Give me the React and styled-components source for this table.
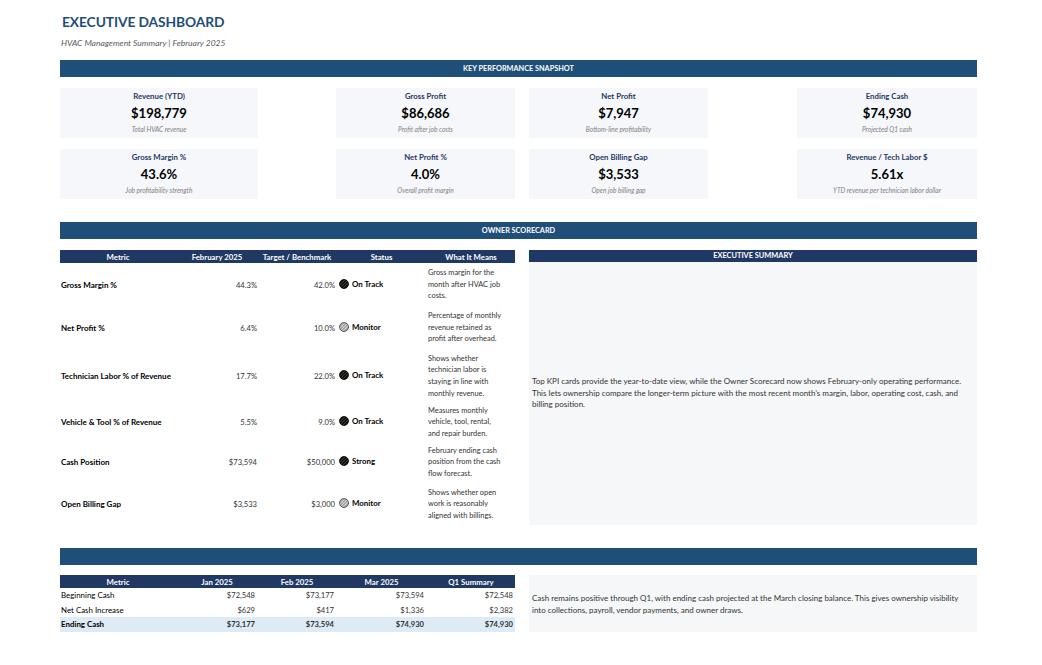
import React from 'react';
import styled, { createGlobalStyle } from 'styled-components';

const GlobalStyle = createGlobalStyle`
    html, body {
        margin: 0;
        padding: 0;
        background: #fff;
    }
    body {
        font-family: Lato, "Liberation Sans", sans-serif;
        color: #000;
    }
`;

const NAVY = '#1f3864';
const BLUE = '#1f4e79';

const Page = styled.div`
    width: 917px;
    padding: 13px 0 30px 60px;
`;

const Title = styled.h1`
    margin: 0 0 0 2px;
    font-size: 13.8px;
    line-height: 18px;
    font-weight: 700;
    letter-spacing: -0.1px;
    color: ${ BLUE };
`;

const Subtitle = styled.div`
    margin: 7px 0 0 1px;
    font-size: 8.5px;
    line-height: 10px;
    font-style: italic;
    color: #595959;
`;

const Banner = styled.div`
    margin-top: ${ props => props.gap }px;
    height: 17px;
    line-height: 17px;
    background: ${ BLUE };
    color: #fff;
    font-size: 7.3px;
    font-weight: 700;
    text-align: center;
`;

const KpiGrid = styled.div`
    margin-top: 11px;
    display: grid;
    grid-template-columns: 198px 78px 179px 14px 179px 89px 180px;
    grid-auto-rows: 50px;
    row-gap: 11px;
`;

const Card = styled.div`
    grid-column: ${ props => props.col };
    background: #f5f7fa;
    display: flex;
    flex-direction: column;
    align-items: center;
    padding-top: 3px;
`;

const CardLabel = styled.div`
    font-size: 7.8px;
    line-height: 10px;
    font-weight: 700;
    color: ${ NAVY };
`;

const CardValue = styled.div`
    margin-top: 4px;
    font-size: 13px;
    line-height: 16px;
    font-weight: 700;
    color: #000;
`;

const CardNote = styled.div`
    margin-top: 4px;
    font-size: 6.6px;
    line-height: 8px;
    font-style: italic;
    color: #7f7f7f;
`;

const Section = styled.div`
    margin-top: ${ props => props.gap }px;
    display: grid;
    grid-template-columns: 455px 448px;
    column-gap: 14px;
`;

const Table = styled.table`
    width: 455px;
    border-collapse: collapse;
    table-layout: fixed;
    font-size: 7.6px;
    align-self: start;
`;

const HeadCell = styled.th`
    height: 13px;
    padding: 0;
    background: ${ NAVY };
    color: #fff;
    font-size: 7.8px;
    font-weight: 700;
    text-align: center;
`;

const Row = styled.tr`
    height: ${ props => props.h }px;
    background: ${ props => props.highlight ? '#ddebf7' : 'transparent' };
    font-weight: ${ props => props.highlight ? 700 : 400 };
`;

const MetricCell = styled.td`
    padding: 0 0 0 1px;
    font-size: ${ props => props.bold ? 8 : 7.9 }px;
    font-weight: ${ props => props.bold ? 700 : 'inherit' };
    color: #000;
    white-space: nowrap;
`;

const NumCell = styled.td`
    padding: 0 ${ props => props.pad || 2 }px 0 0;
    text-align: right;
    color: #333;
`;

const StatusCell = styled.td`
    padding: 0 0 0 3px;
`;

const Status = styled.span`
    display: inline-flex;
    align-items: center;
    gap: 3px;
    font-size: 7.9px;
    font-weight: 700;
    color: #000;
`;

const MeaningCell = styled.td`
    padding: 0 0 0 1px;
    font-size: 7.4px;
    line-height: 11.6px;
    color: #333;
    white-space: pre;
`;

const Panel = styled.div`
    display: flex;
    flex-direction: column;
`;

const PanelHead = styled.div`
    height: 12px;
    line-height: 12px;
    background: ${ NAVY };
    color: #fff;
    font-size: 7.4px;
    font-weight: 700;
    text-align: center;
`;

const PanelBody = styled.div`
    height: ${ props => props.h }px;
    background: #f6f7f9;
    display: flex;
    align-items: center;
    padding-left: 3px;
    font-size: 8px;
    line-height: ${ props => props.lh }px;
    color: #333;
    white-space: pre;
`;

const StatusIcon = ({ tone }) => {
    const dark = tone === 'dark';
    const id = dark ? 'hatchDark' : 'hatchLight';
    return (
        <svg width="10" height="10" viewBox="0 0 10 10">
            <defs>
                <pattern id={ id } width="2.2" height="2.2" patternUnits="userSpaceOnUse" patternTransform="rotate(45)">
                    <rect width="2.2" height="2.2" fill={ dark ? '#111' : '#a8a8a8' } />
                    <line x1="0" y1="0" x2="0" y2="2.2" stroke={ dark ? '#6a5a48' : '#f4f4f4' } strokeWidth="0.9" />
                </pattern>
            </defs>
            <circle cx="5" cy="5" r="4.5" fill={ `url(#${ id })` } stroke={ dark ? '#000' : '#3a3a3a' } strokeWidth="0.8" />
        </svg>
    );
};

const kpis = [
    { col: 1, label: 'Revenue (YTD)', value: '$198,779', note: 'Total HVAC revenue' },
    { col: 3, label: 'Gross Profit', value: '$86,686', note: 'Profit after job costs' },
    { col: 5, label: 'Net Profit', value: '$7,947', note: 'Bottom-line profitability' },
    { col: 7, label: 'Ending Cash', value: '$74,930', note: 'Projected Q1 cash' },
    { col: 1, label: 'Gross Margin %', value: '43.6%', note: 'Job profitability strength' },
    { col: 3, label: 'Net Profit %', value: '4.0%', note: 'Overall profit margin' },
    { col: 5, label: 'Open Billing Gap', value: '$3,533', note: 'Open job billing gap' },
    { col: 7, label: 'Revenue / Tech Labor $', value: '5.61x', note: 'YTD revenue per technician labor dollar' },
];

const scorecard = [
    { metric: 'Gross Margin %', actual: '44.3%', target: '42.0%', status: 'On Track', tone: 'dark', h: 43,
        meaning: 'Gross margin for the\nmonth after HVAC job\ncosts.' },
    { metric: 'Net Profit %', actual: '6.4%', target: '10.0%', status: 'Monitor', tone: 'light', h: 43,
        meaning: 'Percentage of monthly\nrevenue retained as\nprofit after overhead.' },
    { metric: 'Technician Labor % of Revenue', actual: '17.7%', target: '22.0%', status: 'On Track', tone: 'dark', h: 54,
        meaning: 'Shows whether\ntechnician labor is\nstaying in line with\nmonthly revenue.' },
    { metric: 'Vehicle & Tool % of Revenue', actual: '5.5%', target: '9.0%', status: 'On Track', tone: 'dark', h: 38,
        meaning: 'Measures monthly\nvehicle, tool, rental,\nand repair burden.' },
    { metric: 'Cash Position', actual: '$73,594', target: '$50,000', status: 'Strong', tone: 'dark', h: 42,
        meaning: 'February ending cash\nposition from the cash\nflow forecast.' },
    { metric: 'Open Billing Gap', actual: '$3,533', target: '$3,000', status: 'Monitor', tone: 'light', h: 42,
        meaning: 'Shows whether open\nwork is reasonably\naligned with billings.' },
];

const cashRows = [
    { metric: 'Beginning Cash', values: ['$72,548', '$73,177', '$73,594', '$72,548'] },
    { metric: 'Net Cash Increase', values: ['$629', '$417', '$1,336', '$2,382'] },
    { metric: 'Ending Cash', values: ['$73,177', '$73,594', '$74,930', '$74,930'], highlight: true },
];

const colWidths = [116, 82, 78, 91, 88];

const Cols = () => (
    <colgroup>
        { colWidths.map((w, i) => <col key={ i } style={{ width: w }} />) }
    </colgroup>
);

const App = () => (
    <>
        <GlobalStyle />
        <Page>
            <Title>EXECUTIVE DASHBOARD</Title>
            <Subtitle>HVAC Management Summary | February 2025</Subtitle>

            <Banner gap={ 12 }>KEY PERFORMANCE SNAPSHOT</Banner>
            <KpiGrid>
                { kpis.map(k => (
                    <Card key={ k.label } col={ k.col }>
                        <CardLabel>{ k.label }</CardLabel>
                        <CardValue>{ k.value }</CardValue>
                        <CardNote>{ k.note }</CardNote>
                    </Card>
                )) }
            </KpiGrid>

            <Banner gap={ 23 }>OWNER SCORECARD</Banner>
            <Section gap={ 11 }>
                <Table>
                    <Cols />
                    <thead>
                        <tr>
                            <HeadCell>Metric</HeadCell>
                            <HeadCell>February 2025</HeadCell>
                            <HeadCell>Target / Benchmark</HeadCell>
                            <HeadCell>Status</HeadCell>
                            <HeadCell>What It Means</HeadCell>
                        </tr>
                    </thead>
                    <tbody>
                        { scorecard.map(r => (
                            <Row key={ r.metric } h={ r.h }>
                                <MetricCell bold>{ r.metric }</MetricCell>
                                <NumCell pad={ 1 }>{ r.actual }</NumCell>
                                <NumCell pad={ 1 }>{ r.target }</NumCell>
                                <StatusCell>
                                    <Status>
                                        <StatusIcon tone={ r.tone } />
                                        { r.status }
                                    </Status>
                                </StatusCell>
                                <MeaningCell>{ r.meaning }</MeaningCell>
                            </Row>
                        )) }
                    </tbody>
                </Table>
                <Panel>
                    <PanelHead>EXECUTIVE SUMMARY</PanelHead>
                    <PanelBody h={ 263 } lh={ 11.7 }>
                        { 'Top KPI cards provide the year-to-date view, while the Owner Scorecard now shows February-only operating performance.\nThis lets ownership compare the longer-term picture with the most recent month\u2019s margin, labor, operating cost, cash, and\nbilling position.' }
                    </PanelBody>
                </Panel>
            </Section>

            <Banner gap={ 23 } />
            <Section gap={ 10 }>
                <Table>
                    <Cols />
                    <thead>
                        <tr>
                            <HeadCell>Metric</HeadCell>
                            <HeadCell>Jan 2025</HeadCell>
                            <HeadCell>Feb 2025</HeadCell>
                            <HeadCell>Mar 2025</HeadCell>
                            <HeadCell>Q1 Summary</HeadCell>
                        </tr>
                    </thead>
                    <tbody>
                        { cashRows.map(r => (
                            <Row key={ r.metric } h={ 14.5 } highlight={ r.highlight }>
                                <MetricCell>{ r.metric }</MetricCell>
                                { r.values.map((v, i) => (
                                    <NumCell key={ i } pad={ i % 2 ? 2 : 3 }>{ v }</NumCell>
                                )) }
                            </Row>
                        )) }
                    </tbody>
                </Table>
                <PanelBody h={ 57 } lh={ 12 }>
                    { 'Cash remains positive through Q1, with ending cash projected at the March closing balance. This gives ownership visibility\ninto collections, payroll, vendor payments, and owner draws.' }
                </PanelBody>
            </Section>
        </Page>
    </>
);

export default App;
